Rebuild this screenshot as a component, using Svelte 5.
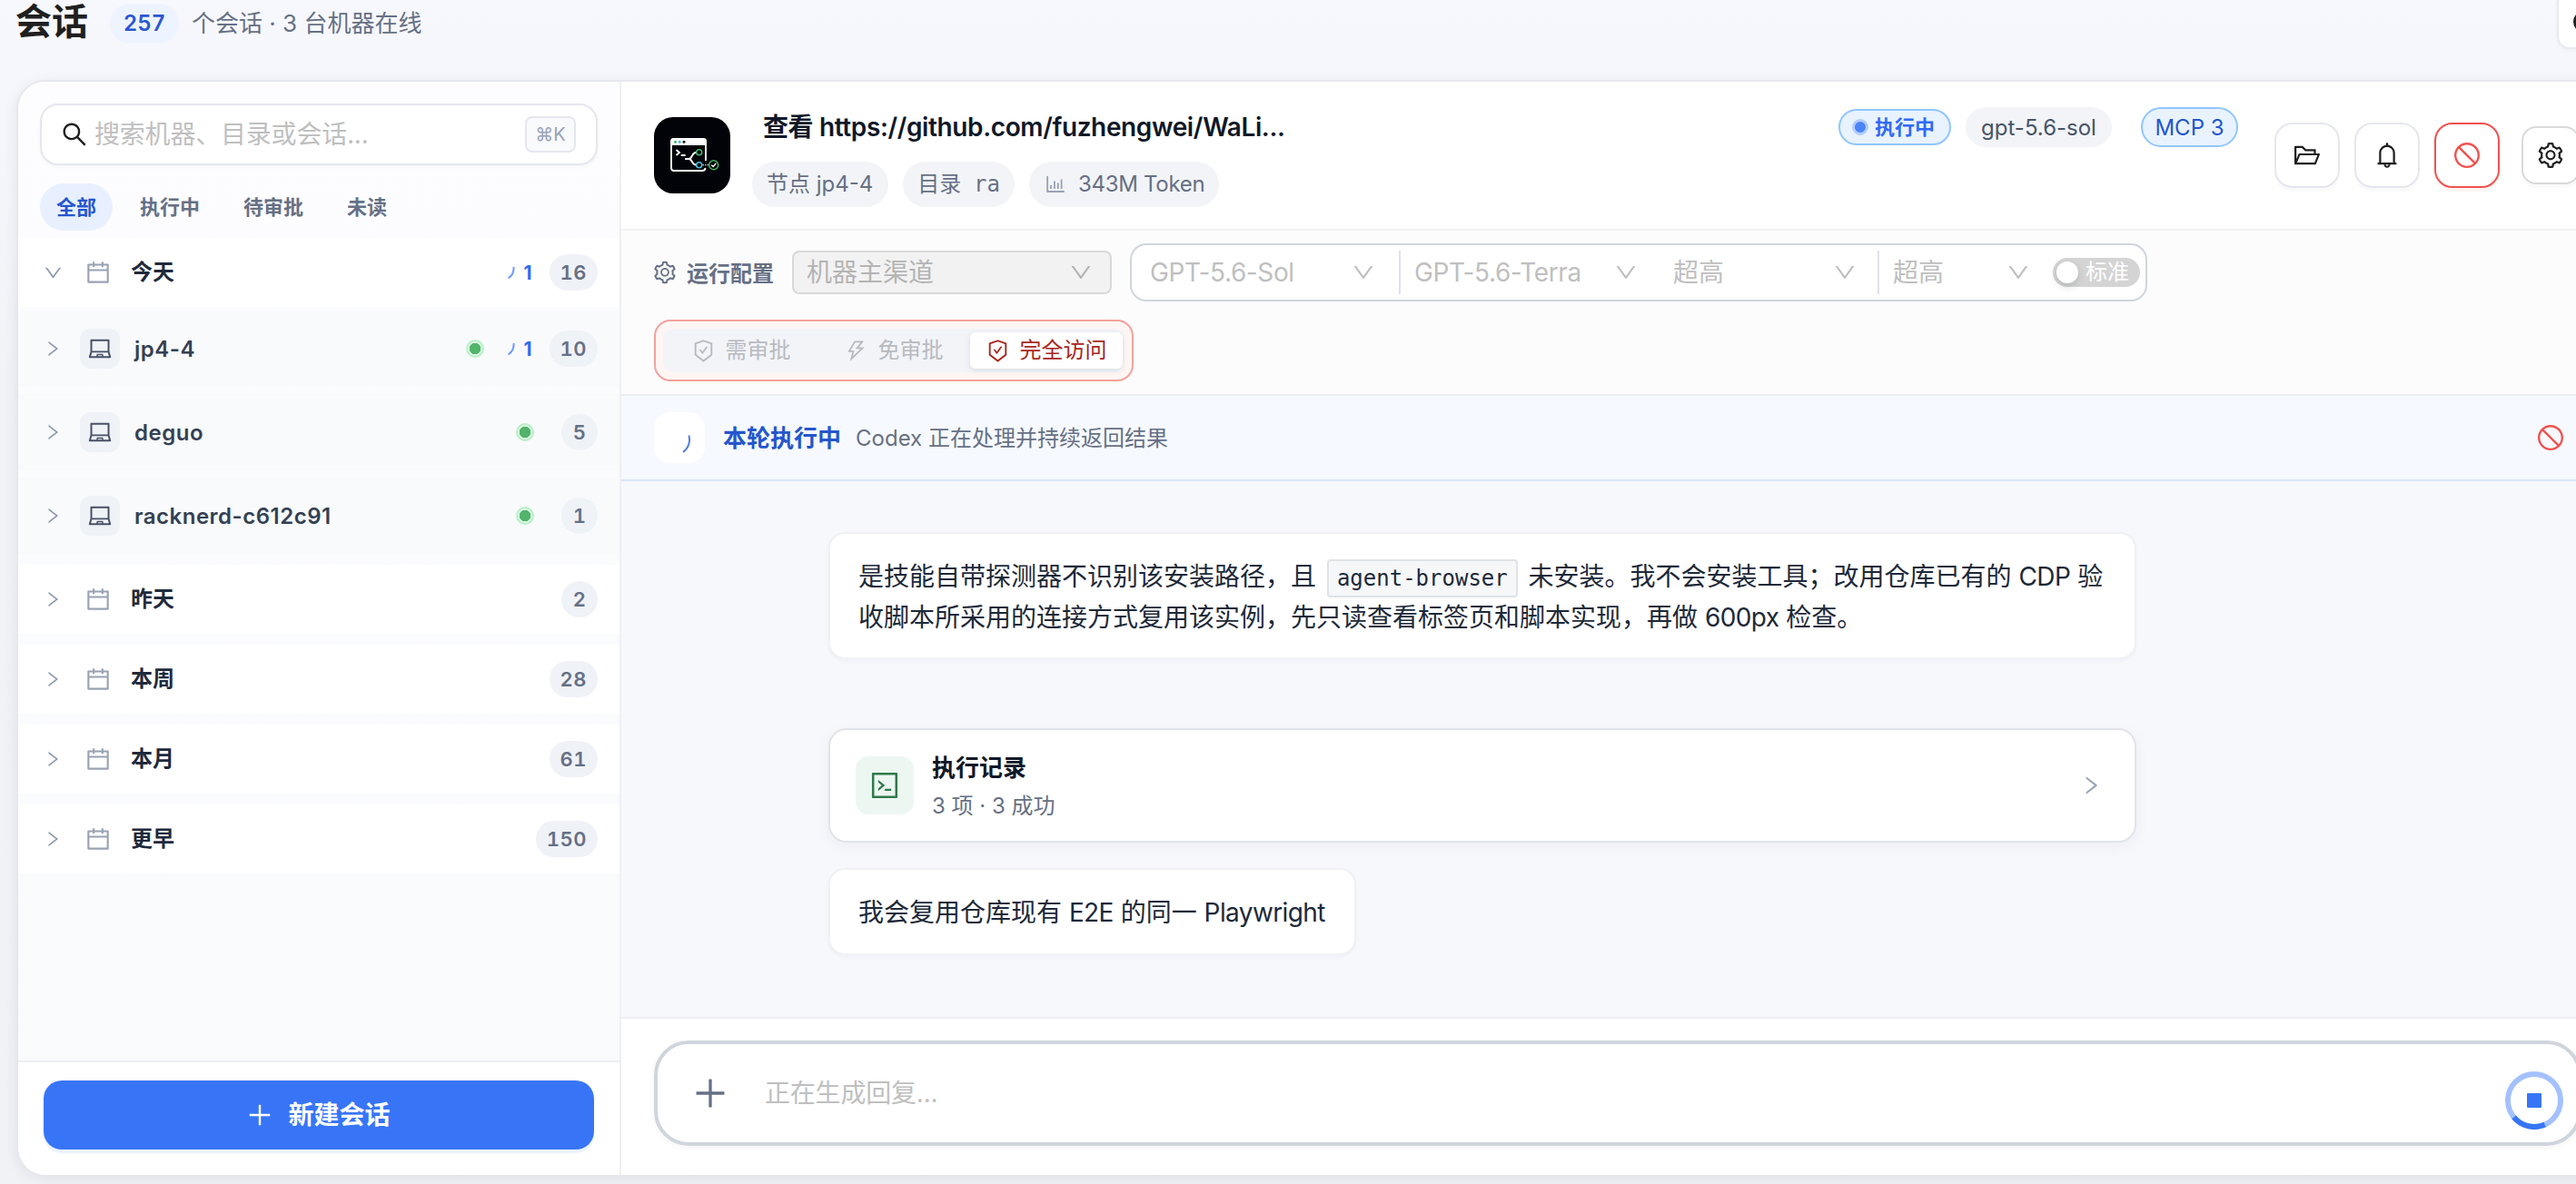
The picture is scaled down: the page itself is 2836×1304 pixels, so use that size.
<script>
const icons = {
  right: 'M765.7 486.8L314.9 134.7A7.97 7.97 0 00302 141v77.3c0 4.9 2.3 9.6 6.1 12.6l360 281.1-360 281.1c-3.9 3-6.1 7.7-6.1 12.6V883c0 6.7 7.7 10.4 12.9 6.3l450.8-352.1a31.96 31.96 0 000-50.4z',
  down: 'M884 256h-75c-5.1 0-9.9 2.5-12.9 6.6L512 654.2 227.9 262.6c-3-4.1-7.8-6.6-12.9-6.6h-75c-6.5 0-10.3 7.4-6.5 12.7l352.6 486.1c12.8 17.6 39 17.6 51.7 0l352.6-486.1c3.9-5.3.1-12.7-6.4-12.7z',
  calendar: 'M880 184H712v-64c0-4.4-3.6-8-8-8h-56c-4.4 0-8 3.6-8 8v64H384v-64c0-4.4-3.6-8-8-8h-56c-4.4 0-8 3.6-8 8v64H144c-17.7 0-32 14.3-32 32v664c0 17.7 14.3 32 32 32h736c17.7 0 32-14.3 32-32V216c0-17.7-14.3-32-32-32zm-40 656H184V460h656v380zM184 392V256h128v48c0 4.4 3.6 8 8 8h56c4.4 0 8-3.6 8-8v-48h256v48c0 4.4 3.6 8 8 8h56c4.4 0 8-3.6 8-8v-48h128v136H184z',
  laptop: 'M956.9 845.1L896.4 632V168c0-17.7-14.3-32-32-32h-704c-17.7 0-32 14.3-32 32v464L67.9 845.1C60.4 866 75.8 888 98 888h828.8c22.2 0 37.6-22 30.1-42.9zM200.4 208h624v395h-624V208zm228.3 608l8.1-37h150.3l8.1 37H428.7zm224 0l-19.1-86.7c-.8-3.7-4.1-6.3-7.8-6.3H398.2c-3.8 0-7 2.6-7.8 6.3L371.3 816H151l42.3-149h638.2l42.3 149H652.7z',
  stop: 'M512 64C264.6 64 64 264.6 64 512s200.6 448 448 448 448-200.6 448-448S759.4 64 512 64zm0 820c-205.4 0-372-166.6-372-372 0-89 31.3-170.8 83.5-234.8l523.3 523.3C682.8 852.7 601 884 512 884zm288.5-137.2L277.2 223.5C341.2 171.3 423 140 512 140c205.4 0 372 166.6 372 372 0 89-31.3 170.8-83.5 234.8z',
  bell: 'M816 768h-24V428c0-141.1-104.3-257.7-240-277.1V112c0-22.1-17.9-40-40-40s-40 17.9-40 40v38.9c-135.7 19.4-240 136-240 277.1v340h-24c-17.7 0-32 14.3-32 32v32c0 4.4 3.6 8 8 8h216c0 61.8 50.2 112 112 112s112-50.2 112-112h216c4.4 0 8-3.6 8-8v-32c0-17.7-14.3-32-32-32zM512 888c-26.5 0-48-21.5-48-48h96c0 26.5-21.5 48-48 48zM304 768V428c0-55.6 21.6-107.8 60.9-147.1S456.4 220 512 220c55.6 0 107.8 21.6 147.1 60.9S720 372.4 720 428v340H304z',
  folder: 'M928 444H820V330.4c0-17.7-14.3-32-32-32H473L355.7 186.2a8.15 8.15 0 00-5.5-2.2H96c-17.7 0-32 14.3-32 32v592c0 17.7 14.3 32 32 32h698c13 0 24.8-7.9 29.7-20l134-332c1.5-3.8 2.3-7.9 2.3-12 0-17.7-14.3-32-32-32zM136 256h188.5l119.6 114.4H748V444H238c-13 0-24.8 7.9-29.7 20L136 643.2V256zm635.3 512H159l103.3-256h612.4L771.3 768z',
  search: 'M909.6 854.5L649.9 594.8C690.2 542.7 712 479 712 412c0-80.2-31.3-155.4-87.9-212.1-56.6-56.7-132-87.9-212.1-87.9s-155.5 31.3-212.1 87.9C143.2 256.5 112 331.8 112 412c0 80.1 31.3 155.5 87.9 212.1C256.5 680.8 331.8 712 412 712c67 0 130.6-21.8 182.7-62l259.7 259.6a8.2 8.2 0 0011.6 0l43.6-43.5a8.2 8.2 0 000-11.6zM570.4 570.4C528 612.7 471.8 636 412 636s-116-23.3-158.4-65.6C211.3 528 188 471.8 188 412s23.3-116.1 65.6-158.4C296 211.3 352.2 188 412 188s116.1 23.2 158.4 65.6S636 352.2 636 412s-23.3 116.1-65.6 158.4z',
  setting: 'M924.8 625.7l-65.5-56c3.1-19 4.7-38.4 4.7-57.8s-1.6-38.8-4.7-57.8l65.5-56a32.03 32.03 0 009.3-35.2l-.9-2.6a443.74 443.74 0 00-79.7-137.9l-1.8-2.1a32.12 32.12 0 00-35.1-9.5l-81.3 28.9c-30-24.6-63.5-44-99.7-57.6l-15.7-85a32.05 32.05 0 00-25.8-25.7l-2.7-.5c-52.1-9.4-106.9-9.4-159 0l-2.7.5a32.05 32.05 0 00-25.8 25.7l-15.8 85.4a351.86 351.86 0 00-99 57.4l-81.9-29.1a32 32 0 00-35.1 9.5l-1.8 2.1a446.02 446.02 0 00-79.7 137.9l-.9 2.6c-4.5 12.5-.8 26.5 9.3 35.2l66.3 56.6c-3.1 18.8-4.6 38-4.6 57.1 0 19.2 1.5 38.4 4.6 57.1L99 625.5a32.03 32.03 0 00-9.3 35.2l.9 2.6c18.1 50.4 44.9 96.9 79.7 137.9l1.8 2.1a32.12 32.12 0 0035.1 9.5l81.9-29.1c29.8 24.5 63.1 43.9 99 57.4l15.8 85.4a32.05 32.05 0 0025.8 25.7l2.7.5a449.4 449.4 0 00159 0l2.7-.5a32.05 32.05 0 0025.8-25.7l15.7-85a350 350 0 0099.7-57.6l81.3 28.9a32 32 0 0035.1-9.5l1.8-2.1c34.8-41.1 61.6-87.5 79.7-137.9l.9-2.6c4.5-12.3.8-26.3-9.3-35zM788.3 465.9c2.5 15.1 3.8 30.6 3.8 46.1s-1.3 31-3.8 46.1l-6.6 40.1 74.7 63.9a370.03 370.03 0 01-42.6 73.6L721 702.8l-31.4 25.8c-23.9 19.6-50.5 35-79.3 45.8l-38.1 14.3-17.9 97a377.5 377.5 0 01-85 0l-17.9-97.2-37.8-14.5c-28.5-10.8-55-26.2-78.7-45.7l-31.4-25.9-93.4 33.2c-17-22.9-31.2-47.6-42.6-73.6l75.5-64.5-6.5-40c-2.4-14.9-3.7-30.3-3.7-45.5 0-15.3 1.2-30.6 3.7-45.5l6.5-40-75.5-64.5c11.3-26.1 25.6-50.7 42.6-73.6l93.4 33.2 31.4-25.9c23.7-19.5 50.2-34.9 78.7-45.7l37.9-14.3 17.9-97.2c28.1-3.2 56.8-3.2 85 0l17.9 97 38.1 14.3c28.7 10.8 55.4 26.2 79.3 45.8l31.4 25.8 92.8-32.9c17 22.9 31.2 47.6 42.6 73.6L781.8 426l6.5 39.9zM512 326c-97.2 0-176 78.8-176 176s78.8 176 176 176 176-78.8 176-176-78.8-176-176-176zm79.2 255.2A111.6 111.6 0 01512 614c-29.9 0-58-11.7-79.2-32.8A111.6 111.6 0 01400 502c0-29.9 11.7-58 32.8-79.2C454 401.6 482.1 390 512 390c29.9 0 58 11.6 79.2 32.8A111.6 111.6 0 01624 502c0 29.9-11.7 58-32.8 79.2z',
  safety: 'M866.9 169.9L527.1 54.1C523 52.7 517.5 52 512 52s-11 .7-15.1 2.1L157.1 169.9c-8.3 2.8-15.1 12.4-15.1 21.2v482.4c0 8.8 5.7 20.4 12.6 25.9L499.3 968c3.5 2.7 8 4.1 12.6 4.1s9.2-1.4 12.6-4.1l344.7-268.6c6.9-5.4 12.6-17 12.6-25.9V191.1c.2-8.8-6.6-18.3-14.9-21.2zM810 654.3L512 886.5 214 654.3V226.7l298-101.6 298 101.6v427.6zm-405.8-201c-3-4.1-7.8-6.6-13-6.6H336c-6.5 0-10.3 7.4-6.5 12.7l126.4 174a16.1 16.1 0 0026 0l212.6-292.7c3.8-5.3 0-12.7-6.5-12.7h-55.2c-5.1 0-10 2.5-13 6.6L468.9 542.4l-64.7-89.1z',
  bolt: 'M848 359.3H627.7L825.8 109c4.1-5.3.4-13-6.3-13H436c-2.8 0-5.5 1.5-6.9 4L170 547.5c-3.1 5.3.7 12 6.9 12h174.4l-89.4 357.6c-1.9 7.8 7.5 13.3 13.3 7.7L853.5 373c5.2-4.9 1.7-13.7-5.5-13.7zM378.2 732.5l60.3-241H281.1l189.6-327.4h224.6L487 427.4h211L378.2 732.5z',
  chart: 'M888 792H200V168c0-4.4-3.6-8-8-8h-56c-4.4 0-8 3.6-8 8v688c0 4.4 3.6 8 8 8h752c4.4 0 8-3.6 8-8v-56c0-4.4-3.6-8-8-8zm-600-80h56c4.4 0 8-3.6 8-8V560c0-4.4-3.6-8-8-8h-56c-4.4 0-8 3.6-8 8v144c0 4.4 3.6 8 8 8zm152 0h56c4.4 0 8-3.6 8-8V384c0-4.4-3.6-8-8-8h-56c-4.4 0-8 3.6-8 8v320c0 4.4 3.6 8 8 8zm152 0h56c4.4 0 8-3.6 8-8V462c0-4.4-3.6-8-8-8h-56c-4.4 0-8 3.6-8 8v242c0 4.4 3.6 8 8 8zm152 0h56c4.4 0 8-3.6 8-8V304c0-4.4-3.6-8-8-8h-56c-4.4 0-8 3.6-8 8v400c0 4.4 3.6 8 8 8z',
  code: 'M516 673c0 4.4 3.4 8 7.5 8h185c4.1 0 7.5-3.6 7.5-8v-48c0-4.4-3.4-8-7.5-8h-185c-4.1 0-7.5 3.6-7.5 8v48zm-194.9 6.1l192-161c3.8-3.2 3.8-9.1 0-12.3l-192-160.9A7.95 7.95 0 00308 351v62.7c0 2.4 1 4.6 2.9 6.1L420.7 512l-109.8 92.2a8.1 8.1 0 00-2.9 6.1V673c0 6.8 7.9 10.5 13.1 6.1zM880 112H144c-17.7 0-32 14.3-32 32v736c0 17.7 14.3 32 32 32h736c17.7 0 32-14.3 32-32V144c0-17.7-14.3-32-32-32zm-40 728H184V184h656v656z',
  plus: 'M482 152h60q8 0 8 8v704q0 8-8 8h-60q-8 0-8-8V160q0-8 8-8zM192 474h672q8 0 8 8v60q0 8-8 8H160q-8 0-8-8v-60q0-8 8-8z',
}

const tabs = ['全部', '执行中', '待审批', '未读']
const machines = [
  {name: 'jp4-4', count: 10, running: 1},
  {name: 'deguo', count: 5},
  {name: 'racknerd-c612c91', count: 1},
]
const older = [
  {name: '昨天', count: 2},
  {name: '本周', count: 28},
  {name: '本月', count: 61},
  {name: '更早', count: 150},
]
let activeTab = $state('全部')
</script>

{#snippet icon(name, size)}
  <svg class="icon" width={size} height={size} viewBox="0 0 1024 1024" fill="currentColor"><path d={icons[name]} /></svg>
{/snippet}

{#snippet running(n)}
  <span class="running">
    <svg width="24" height="24" viewBox="0 0 24 24" fill="none"><path d="M17.6 6a14 14 0 0 1-6 12.500" stroke="#6f9bff" stroke-width="2" /></svg>
    {n}
  </span>
{/snippet}

{#snippet group(g)}
  <div class="group">
    <span class="chev">{@render icon(g.open ? 'down' : 'right', g.open ? 23 : 22)}</span>
    <span class="cal">{@render icon('calendar', 30)}</span>
    <span class="label">{g.name}</span>
    {#if g.running}{@render running(g.running)}{/if}
    <span class="count">{g.count}</span>
  </div>
{/snippet}

<div class="page">
  <header class="top">
    <h1>会话</h1>
    <span class="total">257</span>
    <span class="summary">个会话 · 3 台机器在线</span>
    <button class="top-btn" aria-label="帮助"><span></span></button>
  </header>

  <div class="panel">
    <aside>
      <div class="search">
        {@render icon('search', 32)}
        <span>搜索机器、目录或会话...</span>
        <kbd>⌘K</kbd>
      </div>
      <div class="tabs">
        {#each tabs as tab}
          <button class:active={tab === activeTab} onclick={() => (activeTab = tab)}>{tab}</button>
        {/each}
      </div>
      <div class="list">
        {@render group({name: '今天', count: 16, running: 1, open: true})}
        <div class="machines">
          {#each machines as m}
            <div class="machine">
              <span class="chev">{@render icon('right', 22)}</span>
              <span class="device">{@render icon('laptop', 28)}</span>
              <span class="label">{m.name}</span>
              <i class="dot"></i>
              {#if m.running}{@render running(m.running)}{:else}<span class="idle"></span>{/if}
              <span class="count">{m.count}</span>
            </div>
          {/each}
        </div>
        {#each older as g}
          {@render group(g)}
        {/each}
      </div>
      <div class="aside-foot">
        <button class="new">{@render icon('plus', 32)}<span>新建会话</span></button>
      </div>
    </aside>

    <main>
      <div class="head">
        <svg class="avatar" viewBox="0 0 84 84" fill="none">
          <rect width="84" height="84" rx="21" fill="#020308" />
          <path d="M57 48V26M19 28v28a3 3 0 0 0 3 3h31q3.500 0 3.500-3" stroke="#fff" stroke-width="1.800" />
          <path d="M18 31v-4.500a3.500 3.500 0 0 1 3.500-3.500h33a3.500 3.500 0 0 1 3.500 3.500v4.500z" fill="#fff" />
          <circle cx="23.500" cy="27.200" r="1.500" fill="#45b66a" />
          <circle cx="28.200" cy="27.200" r="1.500" fill="#49bfdd" />
          <circle cx="33" cy="27.200" r="1.500" fill="#111" />
          <path d="M24.500 36l3.500 3-3.500 3M29.700 42h5" stroke="#fff" stroke-width="1.900" />
          <path d="M34 46h4.500c4 0 3-7.200 8-7.200M38.500 46c4 0 3 6.700 8 6.700" stroke="#fff" stroke-width="1.900" />
          <circle cx="49.700" cy="38.800" r="3" stroke="#45b66a" stroke-width="1.600" />
          <circle cx="49.700" cy="52.700" r="3" stroke="#49bfdd" stroke-width="1.600" />
          <path d="M53.500 52.700h7" stroke="#fff" stroke-width="1.100" stroke-dasharray="1.500 1" />
          <circle cx="65.700" cy="52.700" r="5" stroke="#3fb45f" stroke-width="1.500" />
          <path d="M63.200 52.700l2 1.800 3-3.600" stroke="#fff" stroke-width="1.400" />
        </svg>
        <div class="title">
          <h2>查看 https://github.com/fuzhengwei/WaLi...</h2>
          <div class="tags">
            <span>节点 jp4-4</span>
            <span>目录 <code>ra</code></span>
            <span class="token">{@render icon('chart', 26)}343M Token</span>
          </div>
        </div>
        <div class="badges">
          <span class="status"><i></i>执行中</span>
          <span class="model">gpt-5.6-sol</span>
          <span class="mcp">MCP 3</span>
        </div>
        <div class="actions">
          <button aria-label="打开目录">{@render icon('folder', 32)}</button>
          <button aria-label="通知">{@render icon('bell', 32)}</button>
          <button class="danger" aria-label="停止">{@render icon('stop', 32)}</button>
          <button class="small" aria-label="设置">{@render icon('setting', 32)}</button>
        </div>
      </div>

      <div class="config">
        <div class="config-row">
          <span class="config-label">{@render icon('setting', 28)}<span>运行配置</span></span>
          <div class="select channel"><span>机器主渠道</span>{@render icon('down', 28)}</div>
          <div class="models">
            <div class="select m1"><span>GPT-5.6-Sol</span>{@render icon('down', 28)}</div>
            <div class="select m2"><span>GPT-5.6-Terra</span>{@render icon('down', 28)}</div>
            <div class="select m3"><span>超高</span>{@render icon('down', 28)}</div>
            <div class="select m4"><span>超高</span>{@render icon('down', 28)}</div>
            <span class="switch"><i></i>标准</span>
          </div>
        </div>
        <div class="access">
          <div class="segments">
            <span>{@render icon('safety', 27)}需审批</span>
            <span>{@render icon('bolt', 27)}免审批</span>
            <span class="on">{@render icon('safety', 27)}完全访问</span>
          </div>
        </div>
      </div>

      <div class="turn">
        <span class="turn-icon">
          <svg width="28" height="28" viewBox="0 0 28 28" fill="none"><path d="M20.500 7.500a17 17 0 0 1-6.500 18.500" stroke="#4f7be0" stroke-width="2" /></svg>
        </span>
        <strong>本轮执行中</strong>
        <span class="turn-text">Codex 正在处理并持续返回结果</span>
        <button aria-label="停止本轮">{@render icon('stop', 32)}</button>
      </div>

      <div class="chat">
        <div class="bubble wide">是技能自带探测器不识别该安装路径，且 <code>agent-browser</code> 未安装。我不会安装工具；改用仓库已有的 <span>CDP</span> 验<br />收脚本所采用的连接方式复用该实例，先只读查看标签页和脚本实现，再做 <span>600px</span> 检查。</div>
        <div class="record">
          <span class="record-icon">{@render icon('code', 36)}</span>
          <div class="record-text">
            <strong>执行记录</strong>
            <span>3 项 · 3 成功</span>
          </div>
          {@render icon('right', 26)}
        </div>
        <div class="bubble">我会复用仓库现有 <span>E2E</span> 的同一 <span>Playwright</span></div>
      </div>

      <div class="composer">
        <div class="input">
          {@render icon('plus', 44)}
          <span>正在生成回复...</span>
          <button class="stop" aria-label="停止生成">
            <svg width="64" height="64" viewBox="0 0 64 64" fill="none">
              <circle cx="32" cy="32" r="29" stroke="#a4c1ff" stroke-width="6" />
              <path d="M9.600 50.400A29 29 0 0 0 43.600 58.600" stroke="#3875f6" stroke-width="6" />
              <rect x="24" y="24" width="16" height="16" rx="1" fill="#3875f6" />
            </svg>
          </button>
        </div>
      </div>
    </main>
  </div>
</div>

<style>
:global(body) {
  margin: 0;
  overflow: hidden;
}
* {
  box-sizing: border-box;
}
button {
  font: inherit;
  padding: 0;
  margin: 0;
  cursor: pointer;
}
h1, h2 {
  margin: 0;
}
.icon {
  display: block;
  flex: none;
}
.page {
  width: 2836px;
  height: 1304px;
  overflow: hidden;
  background: linear-gradient(180deg, #f7f8fd 0, #f2f3f7 420px, #f1f2f6 100%);
  font-family: Inter, "Noto Sans CJK SC", sans-serif;
  color: #1f1f1f;
  white-space: nowrap;
}
.top {
  display: flex;
  align-items: center;
  width: 2900px;
  height: 88px;
  padding: 0 0 37px 17px;
}
h1 {
  margin-top: -3px;
  font-size: 40px;
  font-weight: 700;
  line-height: 48px;
}
.total {
  width: 76px;
  height: 44px;
  margin-left: 24px;
  border-radius: 22px;
  background: #eef4ff;
  color: #2a57d0;
  font-size: 24px;
  font-weight: 600;
  font-variant-numeric: tabular-nums;
  line-height: 44px;
  text-align: center;
}
.summary {
  margin-left: 14px;
  color: #667085;
  font-size: 26px;
  line-height: 44px;
}
.top-btn {
  width: 70px;
  height: 64px;
  margin-left: auto;
  margin-top: -7px;
  margin-right: 15px;
  padding-left: 16px;
  border: 2px solid #e8eaf0;
  border-radius: 14px;
  background: #fff;
  box-shadow: 0 2px 4px rgba(20, 30, 60, 0.04);
}
.top-btn span {
  display: block;
  width: 24px;
  height: 24px;
  margin-top: 4px;
  border: 4px solid #1f1f1f;
  border-radius: 50%;
}
.panel {
  display: flex;
  width: 2860px;
  height: 1206px;
  margin-left: 18px;
  border: 2px solid #e6e8ee;
  border-bottom: 0;
  border-radius: 32px;
  background: #fff;
  overflow: hidden;
  box-shadow: 0 4px 16px rgba(20, 30, 60, 0.08);
}
aside {
  display: flex;
  flex-direction: column;
  width: 664px;
  border-right: 2px solid #eef0f5;
  background: linear-gradient(180deg, #fdfdff, #f9fafc);
}
.search {
  display: flex;
  align-items: center;
  height: 68px;
  margin: 24px 24px 0;
  padding: 0 22px 0 20px;
  border: 2px solid #e5e7ee;
  border-radius: 20px;
  background: #fff;
  box-shadow: 0 2px 4px rgba(20, 30, 60, 0.03);
}
.search span {
  flex: 1;
  margin-left: 6px;
  color: #bfbfbf;
  font-size: 28px;
  line-height: 40px;
  letter-spacing: -0.2px;
}
kbd {
  width: 56px;
  height: 40px;
  border: 2px solid #e5e7ee;
  border-radius: 8px;
  background: #f9fafc;
  color: #98a2b8;
  font-family: Inter, "DejaVu Sans", sans-serif;
  font-size: 20px;
  line-height: 36px;
  text-align: center;
}
.tabs {
  display: flex;
  gap: 12px;
  margin: 20px 24px 8px;
}
.tabs button {
  height: 52px;
  padding: 0 18px;
  border: 0;
  border-radius: 26px;
  background: none;
  color: #667085;
  font-size: 22px;
  font-weight: 600;
  line-height: 52px;
}
.tabs .active {
  background: #e8f0ff;
  color: #2456cc;
}
.list {
  flex: 1;
}
.group,
.machine {
  display: flex;
  align-items: center;
  padding: 0 24px;
}
.group {
  height: 76px;
  margin-bottom: 12px;
  background: #fff;
}
.chev {
  display: flex;
  justify-content: center;
  width: 28px;
  color: #8f9bb0;
}
.cal {
  margin-left: 21px;
  color: #98a2b3;
}
.group .label {
  flex: 1;
  margin-left: 21px;
  color: #1f2a3d;
  font-size: 24px;
  font-weight: 600;
  line-height: 36px;
}
.count {
  min-width: 40px;
  height: 40px;
  padding: 0 12px;
  border-radius: 20px;
  background: #eff2f7;
  color: #667085;
  font-size: 22px;
  font-weight: 600;
  font-variant-numeric: tabular-nums;
  line-height: 40px;
  text-align: center;
  letter-spacing: 0.5px;
}
.running {
  display: flex;
  align-items: center;
  gap: 4px;
  margin-right: 19px;
  color: #2f6bf5;
  font-size: 21px;
  font-weight: 700;
}
.machines {
  display: flex;
  flex-direction: column;
  gap: 8px;
  margin: -8px 0 12px;
}
.machine {
  height: 84px;
  background: #f9fafc;
}
.device {
  display: grid;
  place-items: center;
  width: 44px;
  height: 44px;
  margin-left: 16px;
  border-radius: 12px;
  background: #eff2f7;
  color: #475067;
}
.machine .label {
  flex: 1;
  margin-left: 16px;
  color: #344054;
  font-size: 24px;
  font-weight: 600;
  letter-spacing: 0.5px;
}
.dot {
  width: 20px;
  height: 20px;
  margin-right: 15px;
  border: 2px solid #b7f0c7;
  border-radius: 50%;
  background: radial-gradient(circle, #52b36b 0 6px, #dcf7e4 6.500px);
}
.idle {
  width: 15px;
}
.aside-foot {
  height: 126px;
  padding: 20px 28px 0;
  border-top: 2px solid #eef0f5;
  background: #fff;
}
.new {
  display: flex;
  align-items: center;
  justify-content: center;
  gap: 15px;
  width: 606px;
  height: 76px;
  padding-right: 2px;
  border: 0;
  border-radius: 20px;
  background: #3875f6;
  color: #fff;
  font-size: 28px;
  font-weight: 700;
  line-height: 40px;
  box-shadow: 0 4px 0 #ebf3ff;
}
main {
  flex: 1;
  display: flex;
  flex-direction: column;
}
.head {
  display: flex;
  height: 164px;
  padding-left: 36px;
  border-bottom: 2px solid #eef0f6;
}
.avatar {
  width: 84px;
  height: 84px;
  margin-top: 39px;
}
.title {
  width: 1200px;
  margin-left: 24px;
  padding-top: 28px;
}
h2 {
  margin-left: 12px;
  color: #101828;
  font-size: 28px;
  font-weight: 600;
  line-height: 44px;
  letter-spacing: -0.38px;
}
.tags {
  display: flex;
  gap: 16px;
  margin-top: 16px;
}
.tags span {
  height: 50px;
  padding: 0 16px;
  border-radius: 25px;
  background: #f2f4f8;
  color: #667085;
  font-size: 24px;
  line-height: 50px;
}
.tags span:first-child {
  padding-right: 17px;
}
.tags code {
  margin-left: 7px;
  font-family: "DejaVu Sans Mono", monospace;
  font-size: 24px;
}
.tags .token {
  display: flex;
  align-items: center;
  gap: 12px;
  letter-spacing: -0.3px;
}
.tags .token .icon {
  color: #98a2b3;
}
.badges {
  display: flex;
  align-items: flex-start;
  padding-top: 28px;
  line-height: 40px;
}
.badges .status {
  display: flex;
  align-items: center;
  width: 124px;
  height: 40px;
  margin: 2px 16px 0 -4px;
  padding-left: 13px;
  border: 2px solid #91c5ff;
  border-radius: 20px;
  background: #e8f3ff;
  color: #2f6bf5;
  font-size: 22px;
  font-weight: 600;
}
.status i {
  width: 18px;
  height: 18px;
  margin-right: 7px;
  border: 3px solid #b3cdfc;
  border-radius: 50%;
  background: #4c84f8;
}
.model {
  width: 161px;
  height: 44px;
  margin-right: 32px;
  border-radius: 22px;
  background: #f2f4f8;
  color: #475569;
  font-size: 24px;
  line-height: 45px;
  text-align: center;
}
.mcp {
  width: 107px;
  height: 44px;
  border: 2px solid #91c5ff;
  border-radius: 22px;
  background: #e8f3ff;
  color: #2456cc;
  font-size: 24px;
  line-height: 41px;
  text-align: center;
}
.actions {
  display: flex;
  gap: 16px;
  margin: 45px 0 0 40px;
}
.actions button {
  display: grid;
  place-items: center;
  width: 72px;
  height: 72px;
  border: 2px solid #e5e7ee;
  border-radius: 20px;
  background: #fff;
  color: #1f1f1f;
  box-shadow: 0 4px 0 #fafafa;
}
.actions .danger {
  border-color: #f0524f;
  color: #f0524f;
  box-shadow: 0 4px 0 #fff5f3;
}
.actions .small {
  width: 64px;
  height: 64px;
  margin: 4px 0 0 8px;
  border-color: #d9d9d9;
  border-radius: 16px;
}
.config {
  height: 182px;
  padding: 14px 36px 0;
  border-bottom: 2px solid #eaeef3;
  background: #fcfcfd;
}
.config-row {
  display: flex;
  align-items: center;
  height: 64px;
}
.config-label {
  display: flex;
  align-items: center;
  gap: 10px;
  width: 152px;
  margin-left: -2px;
  color: #667085;
  font-size: 24px;
  font-weight: 600;
}
.config-label span {
  padding-bottom: 2px;
}
.select {
  display: flex;
  align-items: center;
  justify-content: space-between;
  height: 48px;
  color: #bfbfbf;
  font-size: 28px;
  line-height: 44px;
  letter-spacing: -0.4px;
}
.channel {
  width: 352px;
  margin-left: 2px;
  padding: 0 18px 0 14px;
  border: 2px solid #d9d9d9;
  border-radius: 8px;
  background: #f2f2f2;
  color: #b4b4b4;
  letter-spacing: 0;
}
.models {
  display: flex;
  align-items: center;
  width: 1120px;
  height: 64px;
  margin-left: 20px;
  border: 2px solid #d0d5dd;
  border-radius: 18px;
  background: #fff;
}
.m1 {
  width: 296px;
  padding: 0 25px 0 20px;
  border-right: 2px solid #dfe1e9;
}
.m2 {
  width: 262px;
  padding-left: 15px;
}
.m3 {
  width: 265px;
  padding: 0 22px 0 38px;
  border-right: 2px solid #dfe1e9;
  letter-spacing: 0;
}
.m4 {
  width: 167px;
  padding-left: 15px;
  letter-spacing: 0;
}
.switch {
  display: flex;
  align-items: center;
  width: 96px;
  height: 32px;
  margin-left: 24px;
  padding-left: 4px;
  border-radius: 16px;
  background: #d4d4d4;
  color: #fff;
  font-size: 24px;
  line-height: 32px;
}
.switch i {
  width: 24px;
  height: 24px;
  margin-right: 8px;
  border-radius: 50%;
  background: #fff;
  box-shadow: 0 4px 8px rgba(0, 35, 11, 0.15);
}
.access {
  display: inline-block;
  margin-top: 20px;
  padding: 8px;
  border: 2px solid #f2a29c;
  border-radius: 18px;
  background: #fff6f4;
}
.segments {
  display: flex;
  width: 508px;
  height: 48px;
  padding: 4px 2px;
  border-radius: 12px;
  background: #f2f4f8;
}
.segments span {
  display: flex;
  align-items: center;
  justify-content: center;
  gap: 11px;
  width: 168px;
  height: 40px;
  padding-right: 1px;
  border-radius: 6px;
  color: #b8babf;
  font-size: 24px;
  line-height: 40px;
}
.segments .on {
  background: #fff;
  color: #a8261c;
  box-shadow: 0 2px 6px rgba(20, 30, 60, 0.1);
}
.turn {
  display: flex;
  align-items: center;
  height: 94px;
  padding-left: 36px;
  border-bottom: 2px solid #d9e6fa;
  background: #f6f9ff;
}
.turn-icon {
  display: grid;
  place-items: center;
  width: 56px;
  height: 56px;
  margin-right: 20px;
  padding: 8px 0 0 8px;
  border-radius: 18px;
  background: #fff;
}
.turn strong {
  padding-bottom: 3px;
  color: #2456cc;
  font-size: 26px;
  font-weight: 700;
}
.turn-text {
  margin-left: 16px;
  padding-bottom: 3px;
  color: #667085;
  font-size: 24px;
}
.turn button {
  margin-left: auto;
  margin-right: 52px;
  border: 0;
  background: none;
  color: #f0524f;
}
.chat {
  flex: 1;
  display: flex;
  flex-direction: column;
  align-items: flex-start;
  padding: 56px 0 0 228px;
  background: #f7f8fc;
}
.bubble {
  padding: 25px 32px 23px 31px;
  border: 2px solid #eff1f5;
  border-radius: 18px;
  background: #fff;
  color: #1d2939;
  font-size: 28px;
  line-height: 44px;
  box-shadow: 0 2px 4px rgba(20, 30, 60, 0.03);
}
.bubble span {
  letter-spacing: -0.6px;
}
.wide {
  width: 1440px;
  height: 140px;
  margin-bottom: 76px;
}
.bubble code {
  display: inline-block;
  height: 42px;
  margin: 0 4px;
  padding: 0 9px;
  border: 2px solid #dfe3e8;
  border-radius: 4px;
  background: #f5f7f9;
  font-family: "DejaVu Sans Mono", monospace;
  font-size: 24px;
  line-height: 38px;
}
.record {
  display: flex;
  align-items: center;
  width: 1440px;
  height: 126px;
  margin-bottom: 28px;
  padding: 0 35px 0 28px;
  border: 2px solid #e0e4ea;
  border-radius: 20px;
  background: #fff;
  color: #98a2b3;
  box-shadow: 0 4px 16px rgba(20, 30, 60, 0.05);
}
.record-icon {
  display: grid;
  place-items: center;
  width: 64px;
  height: 64px;
  border-radius: 14px;
  background: #edf7f2;
  color: #2e7a4b;
}
.record-text {
  flex: 1;
  display: flex;
  flex-direction: column;
  margin-left: 20px;
  padding-top: 3px;
}
.record-text strong {
  color: #101828;
  font-size: 26px;
  font-weight: 600;
  line-height: 42px;
}
.record-text span {
  color: #667085;
  font-size: 24px;
  line-height: 42px;
}
.composer {
  height: 174px;
  padding: 24px 0 0 36px;
  border-top: 2px solid #eef0f6;
  background: #fff;
}
.input {
  display: flex;
  align-items: center;
  width: 2122px;
  height: 116px;
  padding: 0 16px 0 36px;
  border: 4px solid #d0d5dd;
  border-radius: 38px;
  color: #667085;
  box-shadow: 0 2px 6px rgba(20, 30, 60, 0.05);
}
.input span {
  flex: 1;
  margin-left: 38px;
  color: #bfbfbf;
  font-size: 28px;
  line-height: 40px;
  letter-spacing: -0.2px;
}
.stop {
  height: 64px;
  margin-top: 16px;
  border: 0;
  background: none;
}
</style>
